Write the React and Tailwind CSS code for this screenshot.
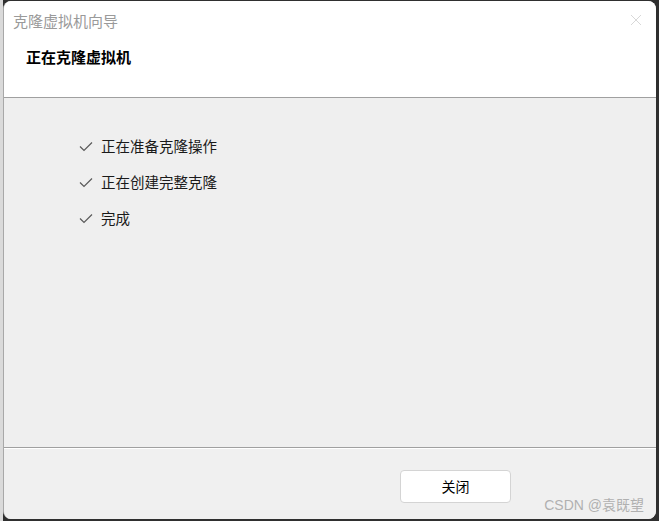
import React from "react";

const STEPS = ["正在准备克隆操作", "正在创建完整克隆", "完成"];

const font = { fontFamily: '"Noto Sans CJK SC", "Noto Sans", sans-serif' };

function Check() {
  return (
    <svg width="14" height="11" viewBox="0 0 14 11" className="flex-shrink-0">
      <polyline points="1,5.5 5,9.5 13,1.5" fill="none" stroke="#5a5a5a" strokeWidth="1.2" />
    </svg>
  );
}

export default function App() {
  return (
    <div
      className="w-[659px] h-[521px] flex bg-[linear-gradient(to_right,#dadada_3px,#2f2f2f_3px)] pl-[3px] pr-[3px] pt-[1px] pb-[2px] overflow-hidden"
      style={font}
    >
      <div className="flex-1 flex flex-col rounded-lg overflow-hidden bg-[#f0f0f0] border-l border-[#a8a8a8]">
        {/* Header */}
        <div className="h-[96px] bg-white flex flex-col">
          <div className="flex items-center justify-between h-[38px] pl-[9px] pr-[14px]">
            <span className="text-[15px] text-[#9a9a9a] leading-none">克隆虚拟机向导</span>
            <svg width="12" height="12" viewBox="0 0 12 12">
              <path d="M1 1L11 11M11 1L1 11" stroke="#d8d8d8" strokeWidth="1" />
            </svg>
          </div>
          <div className="pl-[22px] pt-[10px] text-[15px] font-bold text-black leading-none">正在克隆虚拟机</div>
        </div>
        <div className="h-px bg-[#a0a0a0]" />

        {/* Body */}
        <div className="flex-1 bg-[#efefef] pl-[75px] pt-[39px] flex flex-col gap-[17px]">
          {STEPS.map((s) => (
            <div key={s} className="flex items-center gap-[8px] h-[19px]">
              <Check />
              <span className="text-[14.5px] text-[#1a1a1a] leading-none">{s}</span>
            </div>
          ))}
        </div>

        <div className="h-px bg-[#a0a0a0]" />
        <div className="h-px bg-white" />

        {/* Footer */}
        <div className="h-[70px] bg-[#f0f0f0] flex items-start justify-end pr-[145px] pt-[21px] relative">
          <button className="w-[111px] h-[33px] bg-white border border-[#d4d4d4] rounded-[4px] text-[14px] text-black flex items-center justify-center">
            关闭
          </button>
          <span
            className="absolute right-[12px] bottom-[7px] text-[14px] text-[#b0b0b0] leading-none"
            style={{ fontFamily: '"Liberation Sans", "Noto Sans CJK SC", sans-serif' }}
          >
            CSDN @袁既望
          </span>
        </div>
      </div>
    </div>
  );
}
